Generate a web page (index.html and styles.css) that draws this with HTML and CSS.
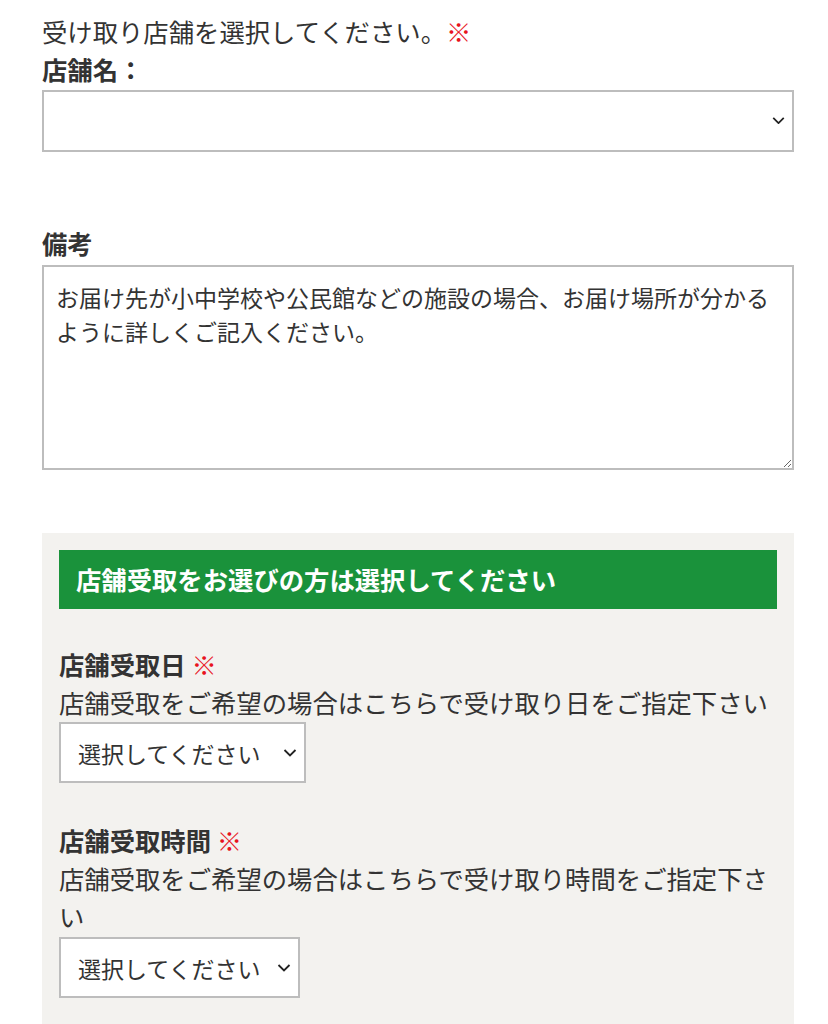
FILE: index.html
```html
<!DOCTYPE html>
<html lang="ja">
<head>
<meta charset="utf-8">
<link rel="stylesheet" href="styles.css">
</head>
<body>
<div class="page">
  <p class="lead">受け取り店舗を選択してください。<span class="req">※</span></p>
  <p class="label">店舗名：</p>
  <div class="select-wrap full">
    <select class="select"><option></option></select>
    <svg class="chev" width="14" height="8" viewBox="0 0 14 8"><path d="M1 1 L7 7 L13 1" fill="none" stroke="#222" stroke-width="2"/></svg>
  </div>

  <p class="label notes-label">備考</p>
  <textarea class="notes">お届け先が小中学校や公民館などの施設の場合、お届け場所が分かるように詳しくご記入ください。</textarea>

  <section class="pickup">
    <h2 class="pickup-head">店舗受取をお選びの方は選択してください</h2>

    <div class="field">
      <p class="label">店舗受取日 <span class="req">※</span></p>
      <p class="desc">店舗受取をご希望の場合はこちらで受け取り日をご指定下さい</p>
      <div class="select-wrap small day">
        <select class="select sm"><option>選択してください</option></select>
        <svg class="chev sm" width="14" height="8" viewBox="0 0 14 8"><path d="M1.5 1 L7 6.5 L12.5 1" fill="none" stroke="#222" stroke-width="1.8"/></svg>
      </div>
    </div>

    <div class="field">
      <p class="label">店舗受取時間 <span class="req">※</span></p>
      <p class="desc">店舗受取をご希望の場合はこちらで受け取り時間をご指定下さい</p>
      <div class="select-wrap small time">
        <select class="select sm"><option>選択してください</option></select>
        <svg class="chev sm" width="14" height="8" viewBox="0 0 14 8"><path d="M1.5 1 L7 6.5 L12.5 1" fill="none" stroke="#222" stroke-width="1.8"/></svg>
      </div>
    </div>
  </section>
</div>
</body>
</html>
```

FILE: styles.css
```css
* { box-sizing: border-box; }
html, body { margin: 0; padding: 0; background: #fff; }
body {
  font-family: "Noto Sans CJK JP", "Noto Sans", sans-serif;
  color: #333;
  font-size: 25.35px;
  line-height: 38px;
}
.page {
  width: 752px;
  margin-left: 42px;
  padding-top: 12px;
}
p { margin: 0; }
.lead { font-weight: 400; }
.req { color: #e8141e; font-weight: 400; }
.label { font-weight: 700; }

.select-wrap { position: relative; }
.select-wrap.full { margin-top: 2px; width: 752px; height: 62px; }
.select {
  appearance: none;
  -webkit-appearance: none;
  width: 100%;
  height: 100%;
  border: 2px solid #bdbdbd;
  background: #fff;
  border-radius: 0;
  font-family: inherit;
  color: #333;
  margin: 0;
  outline: none;
}
.select.sm {
  font-size: 23px;
  padding: 0 0 0 17px;
}
.chev {
  position: absolute;
  right: 9px;
  top: 27px;
  width: 13px;
  height: 7px;
}
.chev.sm { right: 9px; top: 27px; width: 14px; height: 8px; }

.notes-label { margin-top: 72px; }
.notes {
  display: block;
  width: 752px;
  height: 205px;
  margin: 3px 0 0;
  border: 2px solid #bdbdbd;
  border-radius: 0;
  padding: 13px 12px;
  font-family: inherit;
  font-size: 23px;
  line-height: 34px;
  color: #333;
  resize: vertical;
  outline: none;
}

.pickup {
  margin-top: 63px;
  background: #f3f2ef;
  padding: 17px 17px 40px;
}
.pickup-head {
  margin: 0;
  background: #1a923b;
  color: #fff;
  font-size: 25.35px;
  font-weight: 700;
  line-height: 59px;
  height: 59px;
  padding-left: 17px;
}
.field { margin-top: 36px; }
.field + .field { margin-top: 38px; }
.select-wrap.small { height: 61px; }
.select-wrap.day { width: 247px; margin-top: 1px; }
.select-wrap.time { width: 241px; margin-top: 2px; }
```
